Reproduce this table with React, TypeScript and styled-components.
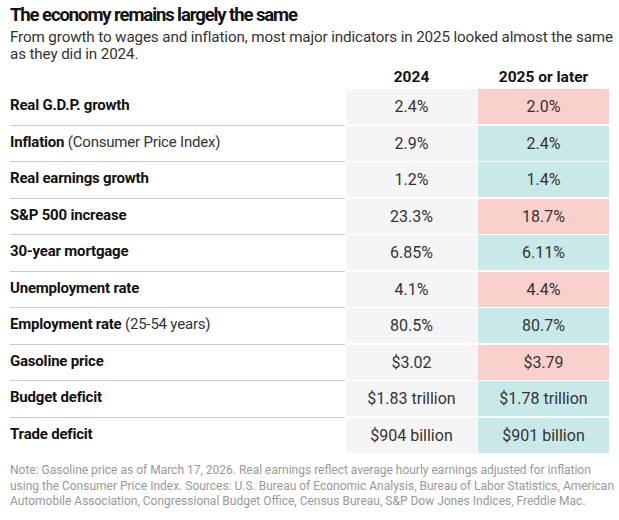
import styled, { createGlobalStyle } from "styled-components";

type Tone = "up" | "down";

interface Indicator {
  label: string;
  note?: string;
  before: string;
  after: string;
  tone: Tone;
}

const ROWS: Indicator[] = [
  { label: "Real G.D.P. growth", before: "2.4%", after: "2.0%", tone: "down" },
  { label: "Inflation", note: "(Consumer Price Index)", before: "2.9%", after: "2.4%", tone: "up" },
  { label: "Real earnings growth", before: "1.2%", after: "1.4%", tone: "up" },
  { label: "S&P 500 increase", before: "23.3%", after: "18.7%", tone: "down" },
  { label: "30-year mortgage", before: "6.85%", after: "6.11%", tone: "up" },
  { label: "Unemployment rate", before: "4.1%", after: "4.4%", tone: "down" },
  { label: "Employment rate", note: "(25-54 years)", before: "80.5%", after: "80.7%", tone: "up" },
  { label: "Gasoline price", before: "$3.02", after: "$3.79", tone: "down" },
  { label: "Budget deficit", before: "$1.83 trillion", after: "$1.78 trillion", tone: "up" },
  { label: "Trade deficit", before: "$904 billion", after: "$901 billion", tone: "up" },
];

function App() {
  return (
    <>
      <GlobalStyle />
      <Page>
        <Title>The economy remains largely the same</Title>
        <Dek>
          From growth to wages and inflation, most major indicators in 2025 looked almost the same
          as they did in 2024.
        </Dek>
        <Table>
          <HeadRow>
            <span />
            <HeadCell>2024</HeadCell>
            <HeadCell>2025 or later</HeadCell>
          </HeadRow>
          {ROWS.map((row, i) => (
            <Row key={row.label}>
              <Label $last={i === ROWS.length - 1}>
                <strong>{row.label}</strong>
                {row.note && <Note> {row.note}</Note>}
              </Label>
              <Value>{row.before}</Value>
              <Value $tone={row.tone}>{row.after}</Value>
            </Row>
          ))}
        </Table>
        <Footnote>
          Note: Gasoline price as of March 17, 2026. Real earnings reflect average hourly earnings
          adjusted for inflation using the Consumer Price Index. Sources: U.S. Bureau of Economic
          Analysis, Bureau of Labor Statistics, American Automobile Association, Congressional
          Budget Office, Census Bureau, S&amp;P Dow Jones Indices, Freddie Mac.
        </Footnote>
      </Page>
    </>
  );
}

export default App;

const GlobalStyle = createGlobalStyle`
  body {
    margin: 0;
    background: #ffffff;
    font-family: Roboto, "Liberation Sans", Arial, sans-serif;
    color: #121212;
  }
`;

const Page = styled.div`
  width: 607px;
  padding: 3px 0 0 10px;
`;

const Title = styled.h1`
  margin: 0;
  font-size: 18.5px;
  line-height: 24px;
  font-weight: 700;
  letter-spacing: -1.1px;
  color: #121212;
`;

const Dek = styled.p`
  margin: 2px 0 0;
  font-size: 15.2px;
  line-height: 17px;
  font-weight: 400;
  letter-spacing: -0.12px;
  color: #333333;
`;

const Table = styled.div`
  width: 597px;
  margin-top: 2px;
`;

const HeadRow = styled.div`
  display: grid;
  grid-template-columns: 335px 131px 131px;
  column-gap: 1px;
  height: 24px;
  align-items: center;
`;

const HeadCell = styled.div`
  text-align: center;
  font-size: 15.5px;
  font-weight: 700;
  color: #121212;
`;

const Row = styled.div`
  display: grid;
  grid-template-columns: 335px 131px 131px;
  column-gap: 1px;
  height: 36.5px;
`;

const Label = styled.div<{ $last?: boolean }>`
  display: flex;
  align-items: center;
  padding-bottom: 3px;
  font-size: 15px;
  border-bottom: ${(p) => (p.$last ? "none" : "1.5px solid #cccccc")};

  strong {
    font-weight: 700;
    letter-spacing: -0.2px;
    color: #121212;
  }
`;

const Note = styled.span`
  white-space: pre;
  font-weight: 400;
  letter-spacing: -0.2px;
  color: #333333;
`;

const Value = styled.div<{ $tone?: Tone }>`
  display: flex;
  align-items: center;
  justify-content: center;
  height: 35.2px;
  font-size: 16px;
  color: #333333;
  background: ${(p) =>
    p.$tone === "down" ? "#f9d0cb" : p.$tone === "up" ? "#c9e9e9" : "#f5f5f5"};
`;

const Footnote = styled.p`
  margin: 9px 0 0;
  font-size: 12px;
  line-height: 15.5px;
  color: #999999;
`;
